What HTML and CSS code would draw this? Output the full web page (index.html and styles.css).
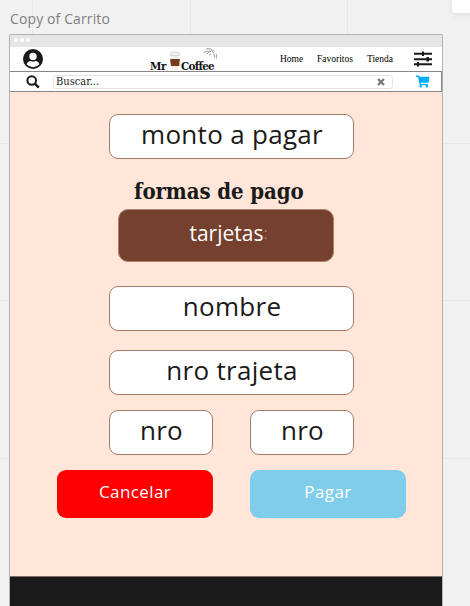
FILE: index.html
```html
<!DOCTYPE html>
<html lang="es">
<head>
<meta charset="utf-8">
<title>Copy of Carrito</title>
<link rel="stylesheet" href="styles.css">
</head>
<body>
<div class="panel"></div>
<div class="frame-title">Copy of Carrito</div>
<main class="window">
  <div class="titlebar"><i></i><i></i><i></i></div>
  <header class="nav">
    <svg class="user" viewBox="0 0 20 20"><circle cx="10" cy="10" r="10" fill="#1a1a1a"/><circle cx="10" cy="7.4" r="3.7" fill="#fff"/><path d="M3.600 15.300c.8-2.300 2.300-3.300 4.100-3.300 1.500.7 3.100.7 4.600 0 1.800 0 3.300 1 4.100 3.300a8.400 8.400 0 0 1-12.800 0z" fill="#fff"/></svg>
    <div class="logo">
      <span class="mr">Mr</span>
      <svg class="cup" viewBox="0 0 12 20"><path d="M1.500 2.500l1-1.500h7l1 1.500v2h-9z" fill="#f4f0ec" stroke="#c9bdb5" stroke-width=".6"/><path d="M2 5h8.500l-1 14H3z" fill="#f4efeb"/><path d="M1.200 8h9.600l-.5 7H1.900z" fill="#763a1d"/></svg>
      <span class="coffee">Coffee</span>
      <svg class="sprig" viewBox="0 0 14 12" fill="none" stroke="#888" stroke-width=".8"><path d="M.5 4.500l3-1.200 4-.3M3 .8h4.500l2 1.500M3.500 6.500l2-2 2.500-1.500M8.500 2.500l2.500 3 .5 4M9.500 2l2 1.500M7.500 5.500l-1 2M13.400 6v4.500"/></svg>
    </div>
    <nav class="links"><span class="home">Home</span><span class="fav">Favoritos</span><span class="shop">Tienda</span></nav>
    <svg class="sliders" viewBox="0 0 18 16" fill="#1a1a1a"><path d="M0 1.700h18v2H0zM0 7.200h18v2H0zM0 12.300h18v2H0z"/><rect x="8" y=".5" width="2" height="4.500"/><rect x="12.500" y="6" width="2.500" height="4.500"/><rect x="3" y="11" width="2" height="4.500"/></svg>
  </header>
  <div class="search">
    <svg class="lens" viewBox="0 0 14 14" fill="none" stroke="#1a1a1a"><circle cx="5.700" cy="5.500" r="4.300" stroke-width="2"/><path d="M8.800 8.600l4 4" stroke-width="2.400"/></svg>
    <div class="field"><span>Buscar...</span><svg class="clear" viewBox="0 0 8 8"><path d="M1 1l6 6M7 1L1 7" stroke="#777" stroke-width="2.200"/></svg></div>
    <svg class="cart" viewBox="0 0 14 13" fill="#00b0ff"><path d="M0 .5h3l.5 1.200H13.500L12.600 7.800H4.600l.3 1.200h7v1.300H3.700L2 1.900H0z"/><circle cx="4.700" cy="11.300" r="1.300"/><circle cx="10.900" cy="11.300" r="1.300"/></svg>
  </div>
  <section class="body">
    <div class="box amount"><span>monto a pagar</span></div>
    <h1>formas de pago</h1>
    <div class="cards"><span>tarjetas</span><span class="caret">:</span></div>
    <div class="box name"><span>nombre</span></div>
    <div class="box number"><span>nro trajeta</span></div>
    <div class="pair"><div class="box"><span>nro</span></div><div class="box"><span>nro</span></div></div>
    <div class="actions"><div class="btn cancel">Cancelar</div><div class="btn pay">Pagar</div></div>
  </section>
  <footer></footer>
</main>
</body>
</html>
```
FILE: styles.css
```css
* { box-sizing: border-box; }
html, body { height: 100%; }
body {
  margin: 0;
  overflow: hidden;
  padding: 9px 0 0 9px;
  font-family: "Open Sans", sans-serif;
  color: #1a1a1a;
  background:
    linear-gradient(#e7e7e7, #e7e7e7) 32px 0 / 1px 100% no-repeat,
    linear-gradient(#e7e7e7, #e7e7e7) 190px 0 / 1px 100% no-repeat,
    linear-gradient(#e7e7e7, #e7e7e7) 347px 0 / 1px 100% no-repeat,
    linear-gradient(#e7e7e7, #e7e7e7) 0 143px / 100% 1px no-repeat,
    linear-gradient(#e7e7e7, #e7e7e7) 0 300px / 100% 1px no-repeat,
    linear-gradient(#e7e7e7, #e7e7e7) 0 458px / 100% 1px no-repeat,
    #f1f1f1;
}
svg { display: block; flex: none; }
.panel {
  position: absolute;
  left: 452px;
  top: -10px;
  width: 30px;
  height: 23px;
  border-radius: 4px;
  background: #fff;
  box-shadow: 0 2px 6px rgba(0, 0, 0, .08);
}
.frame-title { height: 25px; padding-left: 1px; font-size: 14px; line-height: 20px; color: #808080; letter-spacing: .12px; }
.window { width: 434px; height: 580px; border: 1px solid #b3b3b3; border-bottom: 0; border-radius: 2px 2px 0 0; }
.titlebar { height: 12px; display: flex; gap: 2px; padding: 3px 0 0 4px; background: #e5e5e5; }
.titlebar i { width: 4px; height: 4px; border-radius: 50%; background: #fff; }
.nav { display: flex; height: 24px; background: #fff; padding-left: 13px; }
.user { width: 20px; height: 20px; margin-top: 2px; }
.logo { position: relative; display: flex; width: 68px; margin-left: 107px; font: bold 11.5px/14px "DejaVu Serif", serif; font-stretch: condensed; color: #111; letter-spacing: -.5px; }
.mr { width: 18px; margin-top: 12px; }
.coffee { margin-top: 12px; letter-spacing: -.7px; }
.cup { width: 12px; height: 20px; margin: 4px 0 0 1px; }
.sprig { position: absolute; left: 53px; top: 1px; width: 14px; height: 12px; }
.links { display: flex; width: 135px; padding-top: 6px; margin-left: 61px; font: 9.5px/13px "Liberation Serif", serif; color: #000; }
.home { width: 37px; padding-left: 1px; }
.fav { width: 50px; padding-left: 1px; }
.shop { padding-left: 1px; }
.sliders { width: 18px; height: 16px; margin-top: 4px; }
.search { display: flex; height: 21px; border: 1px solid #858585; border-width: 1px 1px 1px 0; background: #fff; padding-left: 16px; }
.lens { width: 14px; height: 14px; margin-top: 3px; }
.field { display: flex; justify-content: space-between; width: 340px; height: 14px; margin: 3px 0 0 13px; padding: 0 7px 0 2px; border: 1px solid #e4e4e4; border-radius: 3px; font: 11px/12px "DejaVu Serif", serif; font-stretch: condensed; }
.clear { width: 8px; height: 8px; margin-top: 2px; }
.cart { width: 14px; height: 13px; margin: 3px 0 0 23px; }
.body { display: flex; flex-direction: column; height: 484px; padding: 22px 0 0 99px; background: #ffe6d8; }
.box { display: flex; flex: none; justify-content: center; width: 245px; height: 45px; padding-left: 1px; border: 1px solid #a67a6b; border-radius: 9px; background: #fff; font-size: 26px; line-height: 39px; letter-spacing: .3px; }
h1 { margin: 18px 0 0 25px; height: 32px; font: bold 22px/29px "DejaVu Serif", serif; font-stretch: condensed; letter-spacing: -.1px; white-space: nowrap; }
.cards { display: flex; flex: none; justify-content: center; width: 216px; height: 53px; margin-left: 9px; padding-left: 5px; border: 1px solid #aa8374; border-radius: 10px; background: #75402e; color: #fff; font-size: 21px; line-height: 46px; }
.caret { color: #a57c6e; font-size: 16px; }
.name { margin-top: 24px; }
.number { margin-top: 19px; }
.pair { display: flex; gap: 37px; margin-top: 15px; }
.pair .box { width: 104px; }
.actions { display: flex; gap: 37px; margin: 15px 0 0 -52px; }
.btn { width: 156px; height: 48px; border-radius: 9px; color: #fff; text-align: center; font-size: 17px; line-height: 44px; letter-spacing: .4px; }
.cancel { background: #f00; }
.pay { background: #80cdeb; }
footer { height: 40px; border-top: 1px solid #776e69; background: #1a1a1a; }
```
